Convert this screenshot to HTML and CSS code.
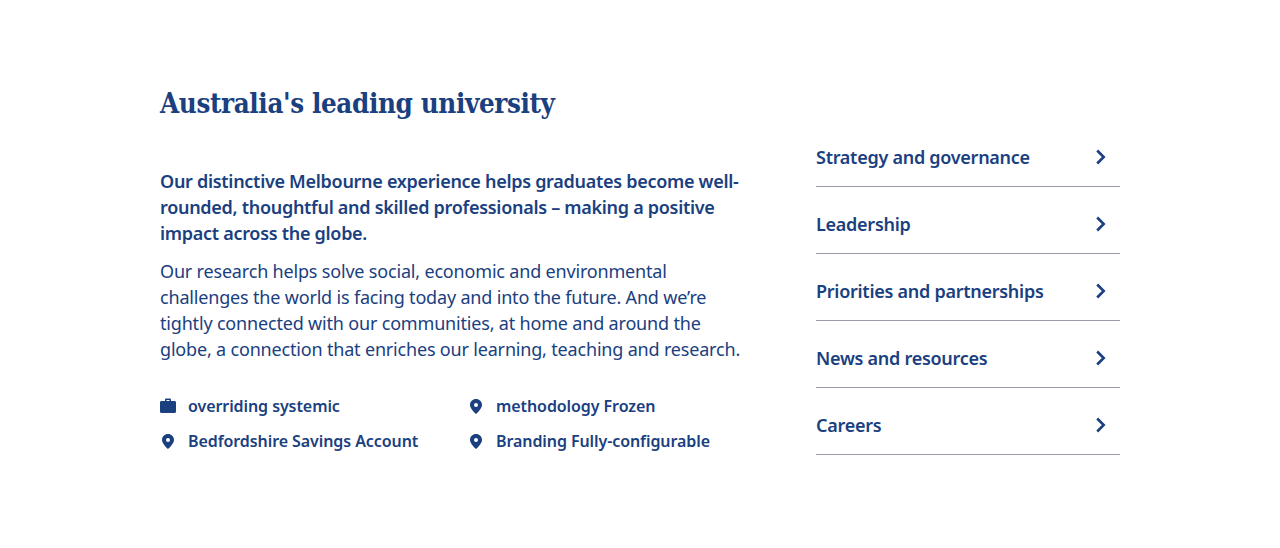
FILE: index.html
```html
<!DOCTYPE html>
<html lang="en">
<head>
    <meta charset="UTF-8">
    <meta name="viewport" content="width=device-width, initial-scale=1.0">
    <title>Australia's leading university</title>
    <link rel="stylesheet" href="styles.css">
</head>
<body>
    <div class="section">
        <div class="mainCol">
            <h2 class="title">Australia's leading university</h2>
            <p class="lead">Our distinctive Melbourne experience helps graduates become well-rounded, thoughtful and skilled professionals – making a positive impact across the globe.</p>
            <p class="body">Our research helps solve social, economic and environmental challenges the world is facing today and into the future. And we’re tightly connected with our communities, at home and around the globe, a connection that enriches our learning, teaching and research.</p>
            <div class="facts">
                <div class="fact">
                    <svg class="factIcon" viewBox="0 0 16 16"><path fill-rule="evenodd" d="M5 3V1.800C5 1 5.600.5 6.300.5h3.400C10.400.5 11 1 11 1.800V3h3.500C15.400 3 16 3.600 16 4.500v9c0 .9-.6 1.500-1.500 1.500h-13C.6 15 0 14.400 0 13.500v-9C0 3.600.6 3 1.500 3zM6.500 3h3V2h-3z"/></svg>
                    <span>overriding systemic</span>
                </div>
                <div class="fact">
                    <svg class="factIcon" viewBox="0 0 16 16"><path fill-rule="evenodd" d="M8 1C4.700 1 2 3.600 2 6.900 2 10.700 8 16 8 16s6-5.300 6-9.100C14 3.600 11.300 1 8 1zm0 8a2 2 0 1 1 0-4 2 2 0 0 1 0 4z"/></svg>
                    <span>methodology Frozen</span>
                </div>
                <div class="fact">
                    <svg class="factIcon" viewBox="0 0 16 16"><path fill-rule="evenodd" d="M8 1C4.700 1 2 3.600 2 6.900 2 10.700 8 16 8 16s6-5.300 6-9.100C14 3.600 11.300 1 8 1zm0 8a2 2 0 1 1 0-4 2 2 0 0 1 0 4z"/></svg>
                    <span>Bedfordshire Savings Account</span>
                </div>
                <div class="fact">
                    <svg class="factIcon" viewBox="0 0 16 16"><path fill-rule="evenodd" d="M8 1C4.700 1 2 3.600 2 6.900 2 10.700 8 16 8 16s6-5.300 6-9.100C14 3.600 11.300 1 8 1zm0 8a2 2 0 1 1 0-4 2 2 0 0 1 0 4z"/></svg>
                    <span>Branding Fully-configurable</span>
                </div>
            </div>
        </div>
        <div class="links">
            <a class="linkRow" href="#"><span>Strategy and governance</span><svg class="chevron" viewBox="0 0 12 16"><path d="M2.200 1.500L8.700 8l-6.500 6.500"/></svg></a>
            <a class="linkRow" href="#"><span>Leadership</span><svg class="chevron" viewBox="0 0 12 16"><path d="M2.200 1.500L8.700 8l-6.500 6.500"/></svg></a>
            <a class="linkRow" href="#"><span>Priorities and partnerships</span><svg class="chevron" viewBox="0 0 12 16"><path d="M2.200 1.500L8.700 8l-6.500 6.500"/></svg></a>
            <a class="linkRow" href="#"><span>News and resources</span><svg class="chevron" viewBox="0 0 12 16"><path d="M2.200 1.500L8.700 8l-6.500 6.500"/></svg></a>
            <a class="linkRow" href="#"><span>Careers</span><svg class="chevron" viewBox="0 0 12 16"><path d="M2.200 1.500L8.700 8l-6.500 6.500"/></svg></a>
        </div>
    </div>
</body>
</html>
```

FILE: styles.css
```css
body {
    margin: 0;
    background-color: white;
    color: #1a4080;
    font-family: "Noto Sans", "Open Sans", sans-serif;
}
.section {
    display: flex;
    width: 960px;
    margin: 0 auto;
    padding-top: 84px;
    gap: 72px;
}
.mainCol {
    width: 584px;
}
.title {
    margin: 0 0 46px;
    font-family: "DejaVu Serif", serif;
    font-size: 27.5px;
    font-stretch: condensed;
    letter-spacing: -0.38px;
    line-height: 38px;
    font-weight: 700;
}
.lead {
    margin: 0 0 12px;
    font-size: 18px;
    letter-spacing: -0.29px;
    line-height: 26px;
    font-weight: 600;
}
.body {
    margin: 0 0 32px;
    font-size: 18px;
    letter-spacing: -0.18px;
    line-height: 26px;
}
.facts {
    display: grid;
    grid-template-columns: 308px 1fr;
    row-gap: 11px;
}
.fact {
    display: flex;
    align-items: center;
    gap: 12px;
    font-size: 16px;
    letter-spacing: -0.08px;
    line-height: 24px;
    font-weight: 600;
}
.factIcon {
    width: 16px;
    height: 16px;
    fill: #1a4080;
}
.links {
    width: 304px;
    padding-top: 36px;
}
.linkRow {
    display: flex;
    justify-content: space-between;
    align-items: center;
    height: 58px;
    padding-top: 8px;
    border-bottom: 1px solid #9a9aaa;
    color: #1a4080;
    font-size: 18px;
    letter-spacing: -0.27px;
    font-weight: 600;
    text-decoration: none;
}
.chevron {
    width: 12px;
    height: 16px;
    margin-right: 13px;
    fill: none;
    stroke: #1a4080;
    stroke-width: 2.6;
}
```
